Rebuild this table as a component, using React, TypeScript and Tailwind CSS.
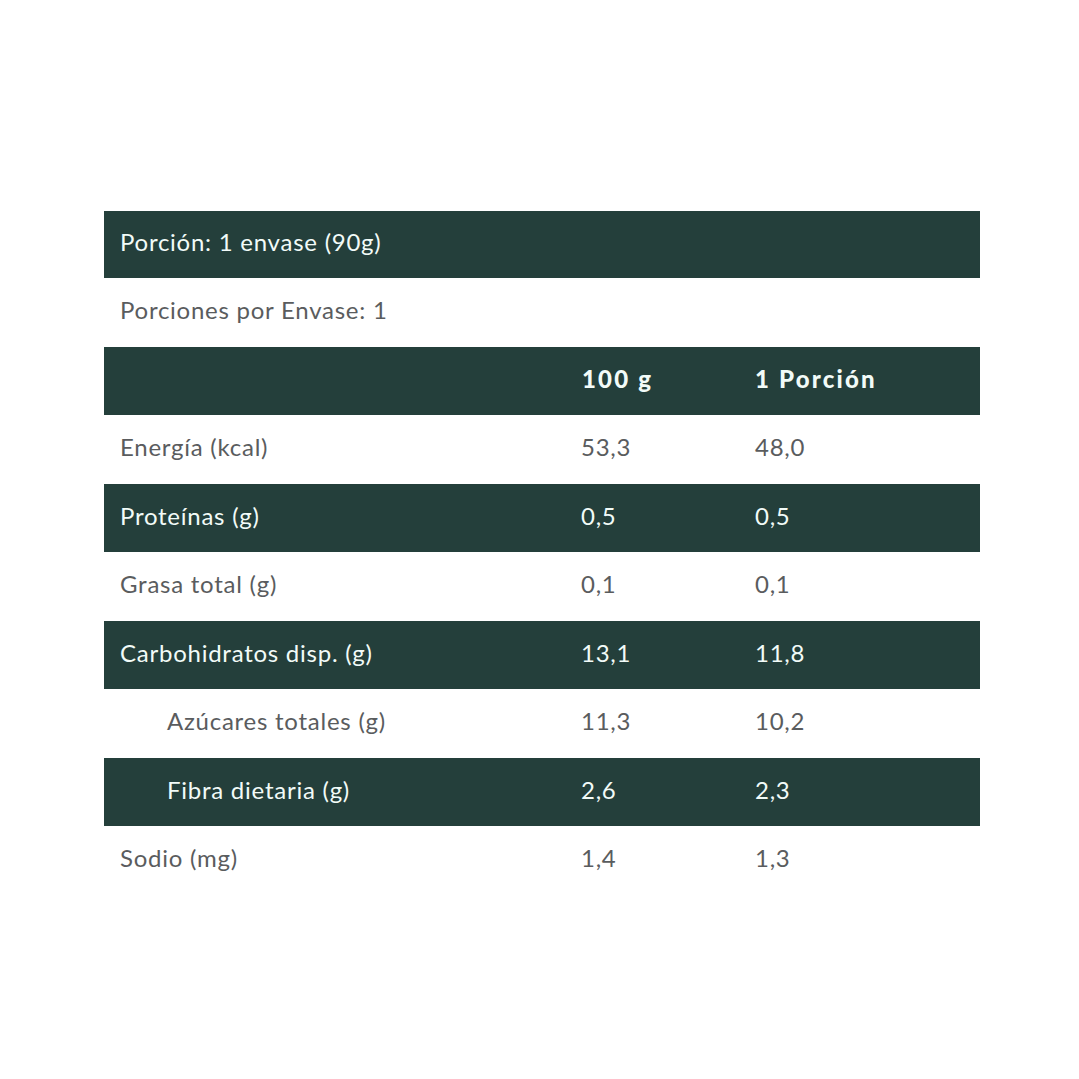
import React from "react";

type Row = { label: string; a: string; b: string; dark: boolean; indent?: boolean };

const rows: Row[] = [
  { label: "Energía (kcal)", a: "53,3", b: "48,0", dark: false },
  { label: "Proteínas (g)", a: "0,5", b: "0,5", dark: true },
  { label: "Grasa total (g)", a: "0,1", b: "0,1", dark: false },
  { label: "Carbohidratos disp. (g)", a: "13,1", b: "11,8", dark: true },
  { label: "Azúcares totales (g)", a: "11,3", b: "10,2", dark: false, indent: true },
  { label: "Fibra dietaria (g)", a: "2,6", b: "2,3", dark: true, indent: true },
  { label: "Sodio (mg)", a: "1,4", b: "1,3", dark: false },
];

export default function App() {
  return (
    <div
      className="w-[1079px] h-[1079px] bg-white pt-[211px] pl-[104px]"
      style={{ fontFamily: "Lato, 'Noto Sans', sans-serif" }}
    >
      <div className="w-[876px] flex flex-col text-[24px] tracking-[0.75px]">
        <div className="h-[67px] bg-[#243f3b] text-[#f2fbf8] flex items-center pl-[16px] pb-[5px]">
          Porción: 1 envase (90g)
        </div>
        <div className="h-[69px] text-[#5a5c5e] flex items-center pl-[16px] pb-[5px]">
          Porciones por Envase: 1
        </div>
        <div className="h-[68px] bg-[#243f3b] text-[#f2fbf8] flex items-center font-black tracking-[2.2px] pb-[5px]">
          <div className="w-[461px]" />
          <div className="w-[174px] pl-[17px]">100 g</div>
          <div className="flex-1 pl-[16px]">1 Porción</div>
        </div>
        {rows.map((r, i) => (
          <div
            key={i}
            className={
              r.dark
                ? "h-[68px] bg-[#243f3b] text-[#f2fbf8] flex items-center pb-[5px]"
                : "h-[69px] text-[#5a5c5e] flex items-center pb-[5px]"
            }
          >
            <div className={r.indent ? "w-[461px] pl-[63px]" : "w-[461px] pl-[16px]"}>{r.label}</div>
            <div className="w-[174px] pl-[16px]">{r.a}</div>
            <div className="flex-1 pl-[16px]">{r.b}</div>
          </div>
        ))}
      </div>
    </div>
  );
}
